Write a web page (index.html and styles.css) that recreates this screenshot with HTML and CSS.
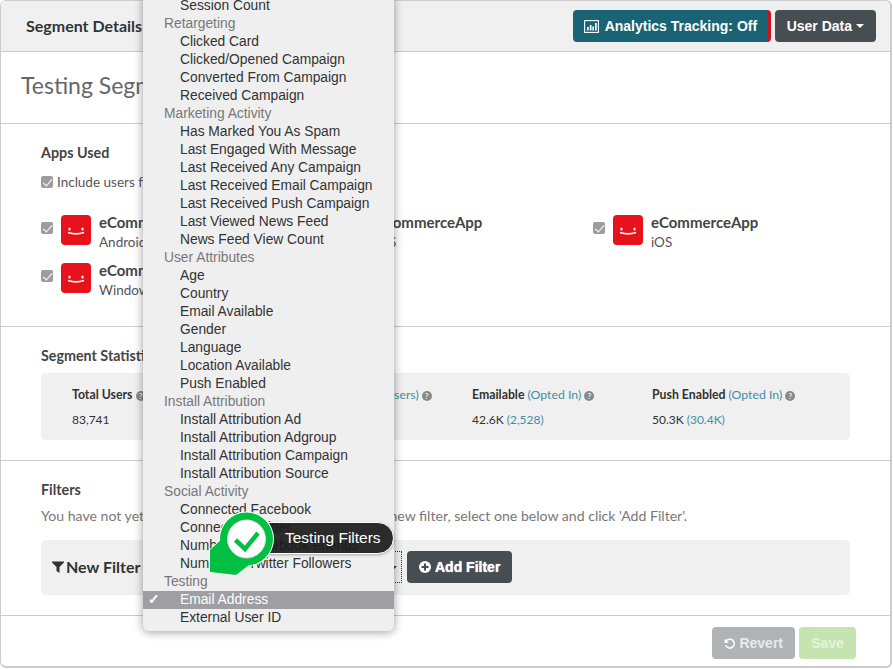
FILE: index.html
```html
<!DOCTYPE html>
<html lang="en">
<head>
    <meta charset="UTF-8">
    <meta name="viewport" content="width=device-width, initial-scale=1.0">
    <title>Segment Details</title>
    <link rel="stylesheet" href="styles.css">
</head>
<body>
    <svg class="defs" width="0" height="0">
        <symbol id="app-logo" viewBox="0 0 30 30">
            <rect width="30" height="30" rx="4" fill="#e6131c"/>
            <ellipse cx="8.500" cy="14" rx="1.100" ry="1.600" fill="#fff"/>
            <ellipse cx="21.500" cy="14" rx="1.100" ry="1.600" fill="#fff"/>
            <path d="M7 17.500c5 1.800 11 1.800 16 0" fill="none" stroke="#fff" stroke-width="1.800"/>
        </symbol>
    </svg>

    <div class="card">
        <header class="topbar">
            <span class="topbar-title">Segment Details</span>
            <div class="topbar-actions">
                <button class="btn btn-tracking">
                    <svg width="15" height="13" viewBox="0 0 15 13"><rect x=".6" y=".6" width="13.800" height="11.800" fill="none" stroke="#fff" stroke-width="1.100"/><path d="M3 7h1.700v3.600H3zM5.800 5h1.700v5.600H5.800zM8.300 6.500H10v4.100H8.300zM11 3h1.700v7.600H11z" fill="#fff"/></svg>
                    Analytics Tracking: Off
                </button>
                <button class="btn btn-dark">User Data <span class="caret"></span></button>
            </div>
        </header>

        <section class="title-row">
            <h1>Testing Segment</h1>
        </section>

        <section class="apps">
            <h2>Apps Used</h2>
            <div class="include-row"><span class="check"></span>Include users from all apps</div>
            <div class="app-grid">
                <div class="app">
                    <span class="check"></span>
                    <svg class="app-logo" width="30" height="30"><use href="#app-logo"/></svg>
                    <div><div class="app-name">eCommerceApp</div><div class="app-os">Android</div></div>
                </div>
                <div class="app">
                    <span class="check"></span>
                    <svg class="app-logo" width="30" height="30"><use href="#app-logo"/></svg>
                    <div><div class="app-name">eCommerceApp</div><div class="app-os">iOS</div></div>
                </div>
                <div class="app">
                    <span class="check"></span>
                    <svg class="app-logo" width="30" height="30"><use href="#app-logo"/></svg>
                    <div><div class="app-name">eCommerceApp</div><div class="app-os">iOS</div></div>
                </div>
                <div class="app">
                    <span class="check"></span>
                    <svg class="app-logo" width="30" height="30"><use href="#app-logo"/></svg>
                    <div><div class="app-name">eCommerceApp</div><div class="app-os">Windows</div></div>
                </div>
            </div>
        </section>

        <section class="stats">
            <h2>Segment Statistics</h2>
            <div class="stat-box">
                <div class="stat">
                    <div class="stat-label">Total Users <span class="help">?</span></div>
                    <div class="stat-value">83,741</div>
                </div>
                <div class="stat">
                    <div class="stat-label">Reachable Users <span class="teal">(All Users)</span> <span class="help">?</span></div>
                    <div class="stat-value">61.2K <span class="teal">(30,528)</span></div>
                </div>
                <div class="stat">
                    <div class="stat-label">Emailable <span class="teal">(Opted In)</span> <span class="help">?</span></div>
                    <div class="stat-value">42.6K <span class="teal">(2,528)</span></div>
                </div>
                <div class="stat">
                    <div class="stat-label">Push Enabled <span class="teal">(Opted In)</span> <span class="help">?</span></div>
                    <div class="stat-value">50.3K <span class="teal">(30.4K)</span></div>
                </div>
            </div>
        </section>

        <section class="filters">
            <h2>Filters</h2>
            <p class="filters-note">You have not yet added a filter to this segment. To add a new filter, select one below and click 'Add Filter'.</p>
            <div class="filter-box">
                <svg width="12" height="12" viewBox="0 0 12 12"><path d="M0 .5h12v1L7.500 6v6L4.500 10V6L0 1.500z" fill="#333"/></svg>
                <span class="filter-label">New Filter</span>
                <div class="filter-select"><span class="caret caret-small"></span></div>
                <button class="btn btn-dark btn-add">
                    <svg width="12" height="12" viewBox="0 0 12 12"><circle cx="6" cy="6" r="6" fill="#fff"/><path d="M5 2.500h2V5h2.500v2H7v2.500H5V7H2.500V5H5z" fill="#474e52"/></svg>
                    Add Filter
                </button>
            </div>
        </section>

        <footer class="footer">
            <button class="btn btn-revert">
                <svg width="13" height="13" viewBox="0 0 13 13"><path d="M2.300 4.200A5 5 0 1 1 2 8.500" fill="none" stroke="#fff" stroke-width="1.800"/><path d="M.6 1v5h5z" fill="#fff"/></svg>
                Revert
            </button>
            <button class="btn btn-save">Save</button>
        </footer>
    </div>

    <ul class="menu">
        <li>Session Count</li>
        <li class="group">Retargeting</li>
        <li>Clicked Card</li>
        <li>Clicked/Opened Campaign</li>
        <li>Converted From Campaign</li>
        <li>Received Campaign</li>
        <li class="group">Marketing Activity</li>
        <li>Has Marked You As Spam</li>
        <li>Last Engaged With Message</li>
        <li>Last Received Any Campaign</li>
        <li>Last Received Email Campaign</li>
        <li>Last Received Push Campaign</li>
        <li>Last Viewed News Feed</li>
        <li>News Feed View Count</li>
        <li class="group">User Attributes</li>
        <li>Age</li>
        <li>Country</li>
        <li>Email Available</li>
        <li>Gender</li>
        <li>Language</li>
        <li>Location Available</li>
        <li>Push Enabled</li>
        <li class="group">Install Attribution</li>
        <li>Install Attribution Ad</li>
        <li>Install Attribution Adgroup</li>
        <li>Install Attribution Campaign</li>
        <li>Install Attribution Source</li>
        <li class="group">Social Activity</li>
        <li>Connected Facebook</li>
        <li>Connected Twitter</li>
        <li>Number of Facebook Friends</li>
        <li>Number of Twitter Followers</li>
        <li class="group">Testing</li>
        <li class="selected"><span class="tick">✓</span>Email Address</li>
        <li>External User ID</li>
    </ul>

    <div class="hint">Testing Filters</div>
    <svg class="marker" width="76" height="76" viewBox="0 0 76 76">
        <path d="M5 42L20 28 44 57 31 67 5 64z" fill="#00bf41" stroke="#fff" stroke-width="1.500"/>
        <circle cx="41.500" cy="31" r="27.500" fill="#fff"/>
        <path d="M5 42L20 28 44 57 31 67 5 64z" fill="#00bf41"/>
        <circle cx="41.500" cy="31" r="26.500" fill="#00bf41"/>
        <circle cx="41.500" cy="31" r="19" fill="#fff" stroke="#ddd"/>
        <path d="M30.500 32l9.500 9 13-16" fill="none" stroke="#00bf41" stroke-width="4.500"/>
    </svg>
</body>
</html>
```

FILE: styles.css
```css
* {
    box-sizing: border-box;
}
body {
    margin: 0;
    width: 893px;
    height: 669px;
    overflow: hidden;
    position: relative;
    background: #fff;
    font-family: Lato, sans-serif;
    font-size: 14px;
    color: #333;
}
.defs {
    position: absolute;
}
h1, h2, p {
    margin: 0;
}
.card {
    width: 892px;
    height: 668px;
    border: 1px solid #ccc;
    border-width: 1px 2px 2px 1px;
    border-radius: 6px;
    overflow: hidden;
}
.topbar {
    height: 51px;
    background: #f0f0f0;
    border-bottom: 1px solid #ccc;
    display: flex;
    align-items: center;
    justify-content: space-between;
    padding: 0 14px 0 25px;
}
.topbar-title {
    font-size: 16px;
    font-weight: 700;
    color: #333;
    padding-bottom: 2px;
}
.topbar-actions {
    display: flex;
    gap: 4px;
}
.btn {
    height: 32px;
    border: none;
    border-radius: 4px;
    color: #fff;
    font-family: "Liberation Sans", Arial, sans-serif;
    font-size: 14px;
    font-weight: 700;
    white-space: nowrap;
    display: inline-flex;
    align-items: center;
    padding: 0 12px;
}
.btn-tracking {
    width: 198px;
    background: #1a6374;
    border-right: 3px solid #d0121b;
    gap: 6px;
    padding: 0 0 0 11px;
}
.btn-dark {
    background: #474e52;
}
.caret {
    width: 0;
    height: 0;
    margin-left: 4px;
    border: 4px solid transparent;
    border-top-color: #fff;
    border-bottom: 0;
}
.title-row {
    height: 72px;
    border-bottom: 1px solid #ccc;
    padding: 18px 20px 0;
}
h1 {
    font-size: 23px;
    font-weight: 400;
    line-height: 30px;
    color: #666;
}
h2 {
    font-size: 14.3px;
    font-weight: 700;
    color: #444;
    line-height: 18px;
}
.apps {
    height: 203px;
    border-bottom: 1px solid #ccc;
    padding: 20px 40px 0;
}
.check {
    flex: none;
    display: inline-block;
    width: 12px;
    height: 12px;
    border-radius: 2px;
    background: #9c9ca1;
    position: relative;
}
.check::after {
    content: "";
    position: absolute;
    left: 4px;
    top: 1px;
    width: 4px;
    height: 8px;
    border: solid #fff;
    border-width: 0 1.5px 1.5px 0;
    transform: rotate(40deg);
}
.include-row {
    display: flex;
    align-items: center;
    gap: 4px;
    margin-top: 11px;
    height: 18px;
    font-size: 13.5px;
    color: #555;
}
.app-grid {
    display: grid;
    grid-template-columns: repeat(3, 276px);
    grid-auto-rows: 48px;
    margin-top: 24px;
}
.app {
    display: flex;
    align-items: flex-start;
    gap: 8px;
}
.app .check {
    margin-top: 7px;
}
.app-name {
    margin-top: -1px;
    font-size: 15px;
    font-weight: 700;
    line-height: 16px;
    color: #444;
}
.app-os {
    font-size: 13.5px;
    line-height: 24px;
    color: #555;
}
.stats {
    height: 134px;
    border-bottom: 1px solid #ccc;
    padding: 20px 40px 0;
}
.stat-box {
    margin-top: 8px;
    height: 67px;
    width: 809px;
    background: #f0f0f0;
    border-radius: 5px;
    padding: 14px 0 0 31px;
    display: grid;
    grid-template-columns: 200px 200px 180px 180px;
}
.stat-label {
    font-size: 12.3px;
    font-weight: 700;
    color: #333;
    line-height: 16px;
}
.stat-label .teal {
    font-weight: 400;
}
.stat-value {
    font-size: 12px;
    line-height: 16px;
    margin-top: 9px;
    color: #333;
}
.teal {
    color: #3f8ea3;
}
.help {
    display: inline-block;
    width: 10px;
    height: 10px;
    border-radius: 50%;
    background: #888;
    color: #f0f0f0;
    font-size: 8px;
    line-height: 10px;
    text-align: center;
}
.filters {
    height: 155px;
    border-bottom: 1px solid #ccc;
    padding: 20px 40px 0;
}
.filters-note {
    margin-top: 8px;
    font-size: 14.1px;
    line-height: 18px;
    color: #777;
}
.filter-box {
    margin-top: 15px;
    height: 55px;
    width: 809px;
    background: #f0f0f0;
    border-radius: 5px;
    padding: 0 0 1px 11px;
    display: flex;
    align-items: center;
}
.filter-box svg {
    flex: none;
}
.filter-label {
    width: 85px;
    padding: 0 0 2px 2px;
    font-size: 16px;
    font-weight: 700;
    color: #333;
}
.filter-select {
    width: 253px;
    height: 32px;
    border: 1px dotted #333;
    display: flex;
    align-items: center;
    justify-content: flex-end;
    padding-right: 4px;
}
.caret-small {
    border-top-color: #333;
    border-width: 3px;
    border-bottom: 0;
}
.btn-add {
    margin-left: 5px;
    width: 105px;
    gap: 4px;
    text-shadow: 0 0 1px #fff;
}
.footer {
    display: flex;
    justify-content: flex-end;
    gap: 4px;
    padding: 11px 34px 0 0;
}
.btn-revert {
    width: 83px;
    background: #b0b3b6;
    color: #e8eaeb;
    gap: 4px;
}
.btn-save {
    width: 57px;
    background: #c5e4b0;
    color: #e6f3dc;
    justify-content: center;
}
/* native popup from the filter select */
.menu {
    position: absolute;
    left: 143px;
    top: -3px;
    width: 251px;
    margin: 0;
    padding: 0 0 4px;
    list-style: none;
    background: #efefef;
    border-radius: 0 0 6px 6px;
    box-shadow: 0 1px 10px rgba(0, 0, 0, 0.4);
    font-family: "Liberation Sans", Arial, sans-serif;
    font-size: 13.8px;
}
.menu li {
    height: 18px;
    line-height: 17px;
    padding-left: 37px;
    color: #333;
    position: relative;
}
.menu .group {
    padding-left: 21px;
    color: #777;
}
.menu .selected {
    background: #9e9ea3;
    color: #fff;
}
.tick {
    position: absolute;
    left: 5px;
    font-weight: 700;
}
.hint {
    position: absolute;
    left: 262px;
    top: 522px;
    width: 132px;
    height: 32px;
    padding-left: 22px;
    border: 1px solid #fff;
    border-radius: 0 16px 16px 0;
    background: rgba(28, 28, 28, 0.93);
    box-shadow: 0 1px 3px rgba(0, 0, 0, 0.3);
    color: #fff;
    font-family: "Liberation Sans", Arial, sans-serif;
    font-size: 15.500px;
    line-height: 30px;
}
.marker {
    position: absolute;
    left: 205px;
    top: 508px;
}
```
